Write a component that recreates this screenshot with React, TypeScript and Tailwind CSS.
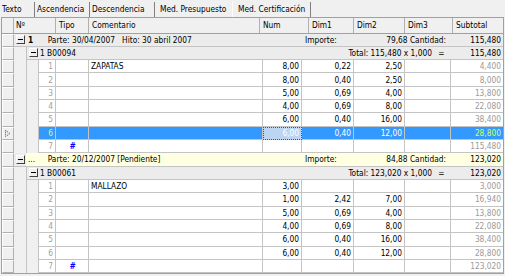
import React from "react";

type R = {
  n: number;
  tipo?: boolean;
  com?: string;
  num?: string;
  d1?: string;
  d2?: string;
  d3?: string;
  sub: string;
  sel?: boolean;
};

const g1: R[] = [
  { n: 1, com: "ZAPATAS", num: "8,00", d1: "0,22", d2: "2,50", sub: "4,400" },
  { n: 2, num: "8,00", d1: "0,40", d2: "2,50", sub: "8,000" },
  { n: 3, num: "5,00", d1: "0,69", d2: "4,00", sub: "13,800" },
  { n: 4, num: "4,00", d1: "0,69", d2: "8,00", sub: "22,080" },
  { n: 5, num: "6,00", d1: "0,40", d2: "16,00", sub: "38,400" },
  { n: 6, num: "6,00", d1: "0,40", d2: "12,00", sub: "28,800", sel: true },
  { n: 7, tipo: true, sub: "115,480" },
];

const g2: R[] = [
  { n: 1, com: "MALLAZO", num: "3,00", sub: "3,000" },
  { n: 2, num: "1,00", d1: "2,42", d2: "7,00", sub: "16,940" },
  { n: 3, num: "5,00", d1: "0,69", d2: "4,00", sub: "13,800" },
  { n: 4, num: "4,00", d1: "0,69", d2: "8,00", sub: "22,080" },
  { n: 5, num: "6,00", d1: "0,40", d2: "16,00", sub: "38,400" },
  { n: 6, num: "6,00", d1: "0,40", d2: "12,00", sub: "28,800" },
  { n: 7, tipo: true, sub: "123,020" },
];

function Indicator({ sel }: { sel?: boolean }) {
  return (
    <div className="w-[12px] shrink-0 h-full border-r border-b border-t border-l border-t-white border-l-white border-r-[#b0b0b0] border-b-[#b0b0b0] bg-[#f0f0f0] flex items-center justify-center">
      {sel && (
        <svg width="6" height="7" viewBox="0 0 6 7">
          <path d="M0.5 0.5 L5 3.5 L0.5 6.5 Z" fill="none" stroke="#505050" strokeWidth="1" strokeDasharray="1 1" />
        </svg>
      )}
    </div>
  );
}

function Minus() {
  return (
    <div className="w-[9px] h-[9px] border border-t-white border-l-white border-b-[#404040] border-r-[#404040] bg-[#f0f0f0] flex items-center justify-center">
      <div className="w-[5px] h-[1px] bg-black" />
    </div>
  );
}

function DataRow({ r }: { r: R }) {
  const sel = !!r.sel;
  const bg = sel ? "bg-[#3399ff]" : "bg-white";
  const txt = sel ? "text-white" : "text-black";
  return (
    <div className="flex h-[13.333px]">
      <Indicator sel={sel} />
      <div className="w-[13px] shrink-0 h-full border-r border-[#c4c4c4] bg-[#f0f0f0]" />
      <div className="w-[12px] shrink-0 h-full border-r border-[#c4c4c4] bg-[#f0f0f0]" />
      <div className={`w-[17px] shrink-0 h-full border-r border-b border-[#c4c4c4] ${bg} flex items-center justify-end pr-[2px] ${sel ? "text-[#d4ff5a]" : "text-[#a0a0a0]"}`}>
        {r.n}
      </div>
      <div className={`w-[33px] shrink-0 h-full border-r border-b border-[#c4c4c4] ${bg} flex items-center justify-center`}>
        {r.tipo && <span className="text-[#0000ff] font-bold italic">#</span>}
      </div>
      <div className={`w-[174px] shrink-0 h-full border-r border-b border-[#c4c4c4] ${bg} ${txt} flex items-center pl-[2px]`}>
        {r.com}
      </div>
      {sel ? (
        <div className="w-[39px] shrink-0 h-full border border-dotted border-[#505050] bg-[#bcd5f3] text-white flex items-center justify-end pr-[2px]">
          {r.num}
        </div>
      ) : (
        <div className={`w-[39px] shrink-0 h-full border-r border-b border-[#c4c4c4] ${bg} ${txt} flex items-center justify-end pr-[2px]`}>
          {r.num}
        </div>
      )}
      <div className={`w-[52px] shrink-0 h-full border-r border-b border-[#c4c4c4] ${bg} ${txt} flex items-center justify-end pr-[2px]`}>
        {r.d1}
      </div>
      <div className={`w-[51px] shrink-0 h-full border-r border-b border-[#c4c4c4] ${bg} ${txt} flex items-center justify-end pr-[2px]`}>
        {r.d2}
      </div>
      <div className={`w-[46px] shrink-0 h-full border-r border-b border-[#c4c4c4] ${bg} ${txt} flex items-center justify-end pr-[2px]`}>
        {r.d3}
      </div>
      <div className={`w-[52px] shrink-0 h-full border-b border-[#c4c4c4] ${bg} flex items-center justify-end pr-[2px] ${sel ? "text-[#d4ff5a]" : "text-[#9a9a9a]"}`}>
        {r.sub}
      </div>
    </div>
  );
}

function GroupRow({
  yellow,
  lead,
  left,
  importe,
  cant,
}: {
  yellow?: boolean;
  lead: React.ReactNode;
  left: React.ReactNode;
  importe: string;
  cant: string;
}) {
  return (
    <div className="flex h-[13.333px]">
      <Indicator />
      <div className="flex-1 flex h-full border-b border-[#c4c4c4] bg-[#ececec]">
        <div className="w-[12px] shrink-0 h-full flex items-center justify-center">
          <Minus />
        </div>
        <div className={`flex-1 flex h-full items-center ${yellow ? "bg-[#ffffe1]" : ""}`}>
          <div className="w-[17px] shrink-0 pl-[2px]">{lead}</div>
          <div className="flex-1 whitespace-pre">{left}</div>
          <div className="w-[52px] shrink-0 pl-[3px]">Importe:</div>
          <div className="w-[97px] shrink-0 text-right pr-[5px] whitespace-pre">{importe + " Cantidad:"}</div>
          <div className="w-[52px] shrink-0 text-right pr-[2px]">{cant}</div>
        </div>
      </div>
    </div>
  );
}

function SubRow({ code, total }: { code: string; total: string }) {
  return (
    <div className="flex h-[13.333px]">
      <Indicator />
      <div className="w-[13px] shrink-0 h-full border-r border-[#c4c4c4] bg-[#f0f0f0]" />
      <div className="flex-1 flex h-full items-center border-b border-[#c4c4c4] bg-[#ececec]">
        <div className="w-[12px] shrink-0 h-full flex items-center justify-center">
          <Minus />
        </div>
        <div className="flex-1 pl-[1px]">{code}</div>
        <div className="w-[130px] shrink-0 text-right">{`Total: ${total} x 1,000`}</div>
        <div className="w-[19px] shrink-0 text-center">=</div>
        <div className="w-[52px] shrink-0 text-right pr-[2px]">{total}</div>
      </div>
    </div>
  );
}

function Tab({ label, w, active }: { label: string; w: string; active?: boolean }) {
  return (
    <div
      className={`${w} shrink-0 h-[15px] mt-[2px] flex items-center pl-[2px] border-r border-[#808080] ${
        active ? "border-l border-l-white pl-[5px]" : ""
      }`}
    >
      {label}
    </div>
  );
}

export default function App() {
  return (
    <div className="w-[505px] h-[276px] overflow-hidden bg-[#f0f0f0] text-black text-[8.3px] leading-none font-['DejaVu_Sans_Condensed','DejaVu_Sans',sans-serif]">
      <div className="flex h-[17px]">
        <Tab label="Texto" w="w-[35px]" />
        <Tab label="Ascendencia" w="w-[55px]" />
        <Tab label="Descendencia" w="w-[65px]" />
        <div className="w-[77px] shrink-0 h-[15px] mt-[2px] flex items-center pl-[5px]">Med. Presupuesto</div>
        <Tab label="Med. Certificación" w="w-[79px]" active />
      </div>
      <div className="ml-[1px] w-[503px] border border-[#a0a0a0] bg-[#f0f0f0]">
        <div className="flex h-[15.5px] border-b border-[#a0a0a0] bg-[#f0f0f0]">
          <div className="w-[12px] shrink-0 border-r border-[#b0b0b0]" />
          <div className="w-[42px] shrink-0 border-r border-[#b0b0b0] flex items-center pl-[2px]">Nº</div>
          <div className="w-[33px] shrink-0 border-r border-[#b0b0b0] flex items-center pl-[3px]">Tipo</div>
          <div className="w-[171px] shrink-0 border-r border-[#b0b0b0] flex items-center pl-[3px]">Comentario</div>
          <div className="w-[49px] shrink-0 border-r border-[#b0b0b0] flex items-center pl-[3px]">Num</div>
          <div className="w-[45px] shrink-0 border-r border-[#b0b0b0] flex items-center pl-[3px]">Dim1</div>
          <div className="w-[51px] shrink-0 border-r border-[#b0b0b0] flex items-center pl-[3px]">Dim2</div>
          <div className="w-[48px] shrink-0 border-r border-[#b0b0b0] flex items-center pl-[3px]">Dim3</div>
          <div className="w-[50px] shrink-0 flex items-center pl-[3px]">Subtotal</div>
        </div>
        <GroupRow
          lead={<span className="font-bold">1</span>}
          left={"  Parte: 30/04/2007   Hito: 30 abril 2007"}
          importe="79,68"
          cant="115,480"
        />
        <SubRow code="1 B00094" total="115,480" />
        {g1.map((r) => (
          <DataRow key={"a" + r.n} r={r} />
        ))}
        <GroupRow yellow lead={<span>...</span>} left={"  Parte: 20/12/2007 [Pendiente]"} importe="84,88" cant="123,020" />
        <SubRow code="1 B00061" total="123,020" />
        {g2.map((r) => (
          <DataRow key={"b" + r.n} r={r} />
        ))}
      </div>
    </div>
  );
}
